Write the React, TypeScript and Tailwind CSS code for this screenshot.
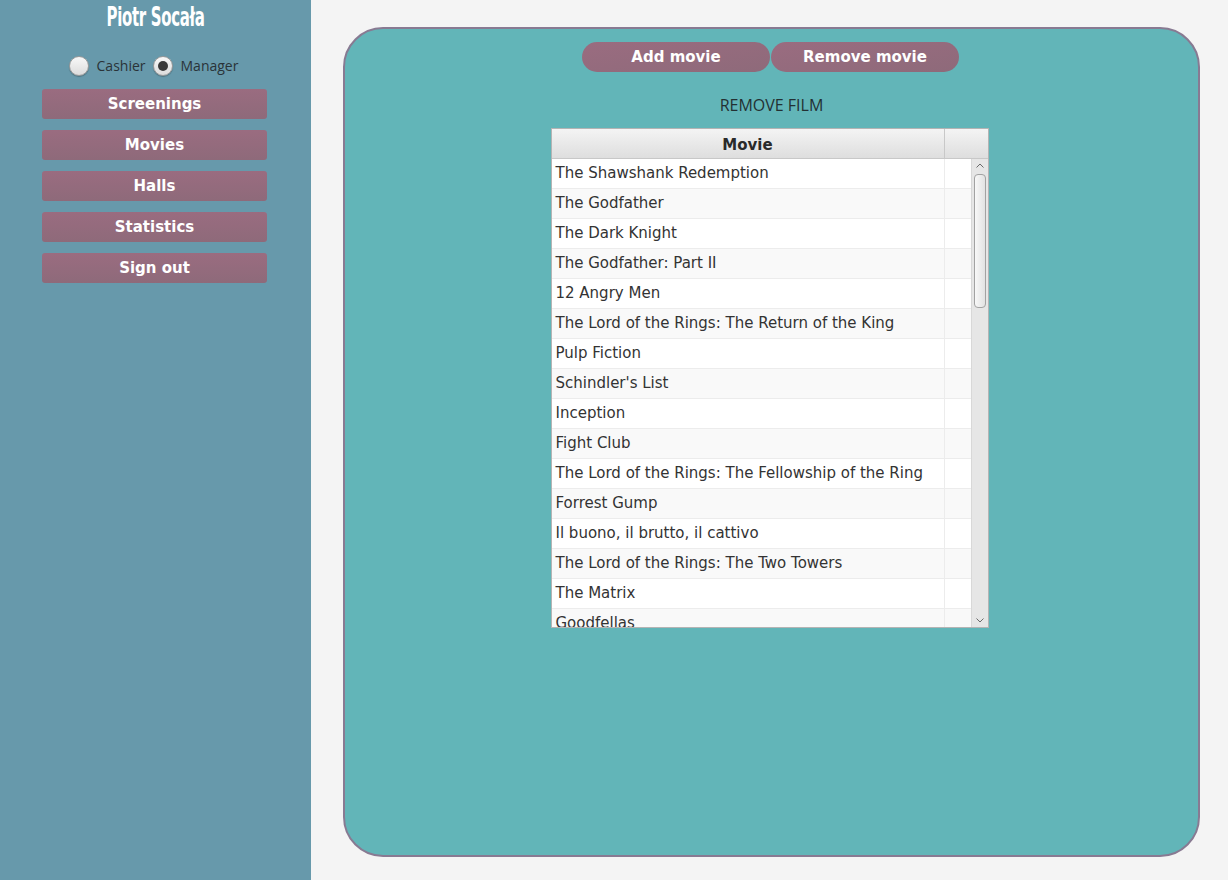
import React, { useState } from 'react';

const movies = [
  'The Shawshank Redemption',
  'The Godfather',
  'The Dark Knight',
  'The Godfather: Part II',
  '12 Angry Men',
  'The Lord of the Rings: The Return of the King',
  'Pulp Fiction',
  "Schindler's List",
  'Inception',
  'Fight Club',
  'The Lord of the Rings: The Fellowship of the Ring',
  'Forrest Gump',
  'Il buono, il brutto, il cattivo',
  'The Lord of the Rings: The Two Towers',
  'The Matrix',
  'Goodfellas',
];

const navItems = ['Screenings', 'Movies', 'Halls', 'Statistics', 'Sign out'];

function Radio({ label, checked, onClick }: { label: string; checked: boolean; onClick: () => void }) {
  return (
    <button onClick={onClick} className="flex items-center gap-[8px] cursor-pointer">
      <span className="w-[20px] h-[20px] rounded-full border border-[#9a9a9a] bg-gradient-to-b from-[#f8f8f8] to-[#dcdcdc] shadow-[0_1px_1px_rgba(0,0,0,0.25)] flex items-center justify-center">
        {checked && <span className="w-[10px] h-[10px] rounded-full bg-[#3a3a3a]" />}
      </span>
      <span className="text-[14px] text-[#2a3338]">{label}</span>
    </button>
  );
}

export default function App() {
  const [role, setRole] = useState<'cashier' | 'manager'>('manager');
  const [tab, setTab] = useState<'add' | 'remove'>('remove');
  const [selected, setSelected] = useState<number | null>(null);

  return (
    <div className="flex w-[1228px] h-[880px] bg-[#f4f4f4] font-['Open_Sans',sans-serif]">
      {/* Sidebar */}
      <aside className="w-[311px] h-full bg-[#6799ab] flex flex-col items-center">
        <div className="h-[34px] flex items-center justify-center">
          <span className="inline-block text-white font-['DejaVu_Sans_Condensed',sans-serif] font-bold text-[26px] tracking-[-0.5px] scale-x-[0.64] leading-none">
            Piotr Socała
          </span>
        </div>
        <div className="flex items-center gap-[7px] mt-[21px] mr-[4px]">
          <Radio label="Cashier" checked={role === 'cashier'} onClick={() => setRole('cashier')} />
          <Radio label="Manager" checked={role === 'manager'} onClick={() => setRole('manager')} />
        </div>
        <nav className="flex flex-col gap-[11px] mt-[13px] mr-[2px]">
          {navItems.map((item) => (
            <button
              key={item}
              className="w-[225px] h-[30px] rounded-[3px] bg-gradient-to-b from-[#9a6c80] to-[#8e6a7a] text-white font-['DejaVu_Sans',sans-serif] font-bold text-[15px] flex items-center justify-center cursor-pointer"
            >
              {item}
            </button>
          ))}
        </nav>
      </aside>

      {/* Main */}
      <main className="flex-1 pl-[32px] pr-[28px] pt-[27px] pb-[23px]">
        <div className="h-full rounded-[40px] border-2 border-[#887a92] bg-[#62b5b8] flex flex-col items-center">
          <div className="flex gap-[1px] mt-[13px] mr-[2px]">
            <button
              onClick={() => setTab('add')}
              className="w-[188px] h-[30px] rounded-full bg-gradient-to-br from-[#9a6c80] to-[#8e6a7a] text-white font-['DejaVu_Sans',sans-serif] font-bold text-[15px] cursor-pointer"
            >
              Add movie
            </button>
            <button
              onClick={() => setTab('remove')}
              className="w-[188px] h-[30px] rounded-full bg-gradient-to-br from-[#9a6c80] to-[#8e6a7a] text-white font-['DejaVu_Sans',sans-serif] font-bold text-[15px] cursor-pointer"
            >
              Remove movie
            </button>
          </div>
          <div className="mt-[22px] text-[16px] text-[#233033] leading-[22px]">
            {tab === 'remove' ? 'REMOVE FILM' : 'ADD FILM'}
          </div>

          {/* Table */}
          <div className="mt-[12px] mr-[4px] w-[438px] h-[500px] border border-[#b4b4b4] bg-white flex flex-col overflow-hidden font-['DejaVu_Sans',sans-serif]">
            <div className="flex h-[30px] shrink-0 bg-gradient-to-b from-[#f4f4f4] to-[#dedede] border-b border-[#c8c8c8]">
              <div className="w-[393px] border-r border-[#c8c8c8] flex items-center justify-center pt-[3px] text-[15px] font-bold text-[#2a2a2a]">
                Movie
              </div>
              <div className="flex-1" />
            </div>
            <div className="flex flex-1 min-h-0">
              <div className="flex-1 overflow-hidden">
                {movies.map((m, i) => (
                  <div
                    key={m}
                    onClick={() => setSelected(i)}
                    className={`flex h-[30px] border-b border-[#ececec] cursor-pointer ${
                      selected === i ? 'bg-[#0096c9] text-white' : i % 2 === 0 ? 'bg-white text-[#333]' : 'bg-[#f9f9f9] text-[#333]'
                    }`}
                  >
                    <div className="w-[393px] border-r border-[#ececec] flex items-center pl-[4px] text-[15px] whitespace-nowrap">
                      {m}
                    </div>
                    <div className="flex-1" />
                  </div>
                ))}
              </div>
              {/* Scrollbar */}
              <div className="w-[17px] bg-[#e6e6e6] border-l border-[#d8d8d8] flex flex-col items-center">
                <svg width="10" height="12" viewBox="0 0 10 12" className="mt-[1px]">
                  <path d="M1.5 7.5 L5 4 L8.5 7.5" fill="none" stroke="#6a6a6a" strokeWidth="1" />
                </svg>
                <div className="w-[12px] h-[134px] mt-[2px] rounded-[4px] border border-[#a2a2a2] bg-gradient-to-r from-[#f8f8f8] to-[#e2e2e2]" />
                <div className="flex-1" />
                <svg width="10" height="12" viewBox="0 0 10 12" className="mb-[1px]">
                  <path d="M1.5 4.5 L5 8 L8.5 4.5" fill="none" stroke="#6a6a6a" strokeWidth="1" />
                </svg>
              </div>
            </div>
          </div>
        </div>
      </main>
    </div>
  );
}
